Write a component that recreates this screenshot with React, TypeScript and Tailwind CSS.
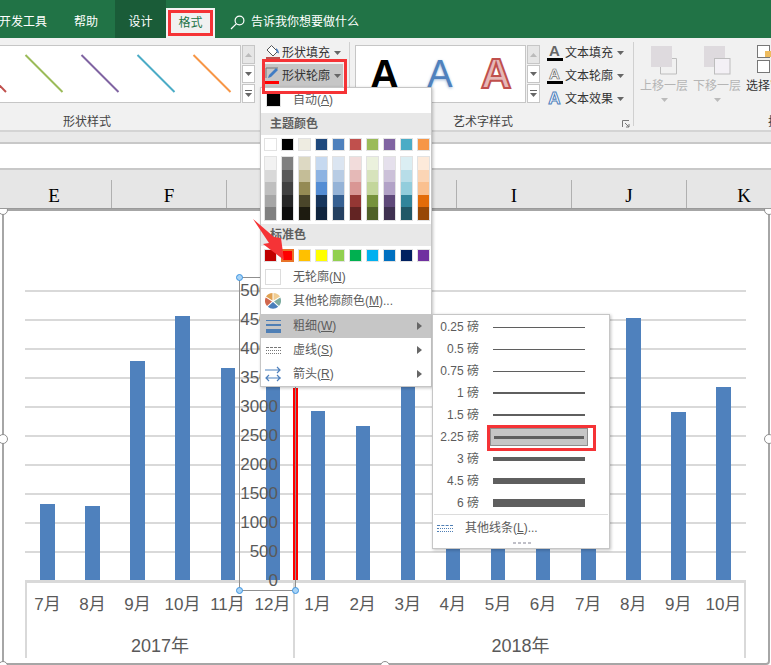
import React from "react";

const theme = ["#ffffff","#000000","#eeece1","#1f497d","#4f81bd","#c0504d","#9bbb59","#8064a2","#4bacc6","#f79646"];
const shades = [
  ["#f2f2f2","#d9d9d9","#bfbfbf","#a6a6a6","#808080"],
  ["#808080","#595959","#404040","#262626","#0d0d0d"],
  ["#ddd9c3","#c4bd97","#948a54","#4a452a","#1d1b10"],
  ["#c6d9f0","#8db3e2","#548dd4","#17365d","#0f243e"],
  ["#dbe5f1","#b8cce4","#95b3d7","#366092","#244061"],
  ["#f2dcdb","#e5b9b7","#d99694","#953734","#632423"],
  ["#ebf1dd","#d7e3bc","#c3d69b","#76923c","#4f6128"],
  ["#e5e0ec","#ccc1d9","#b2a2c7","#5f497a","#3f3151"],
  ["#dbeef3","#b7dde8","#92cddc","#31859b","#205867"],
  ["#fdeada","#fbd5b5","#fac08f","#e36c09","#974806"],
];
const standard = ["#c00000","#ff0000","#ffc000","#ffff00","#92d050","#00b050","#00b0f0","#0070c0","#002060","#7030a0"];
const barHeights = [76,74,219,264,212,195,169,154,215,120,110,130,110,262,168,193];
const months = ["7月","8月","9月","10月","11月","12月"];
const months2 = ["1月","2月","3月","4月","5月","6月","7月","8月","9月","10月"];
const weights = [
  ["0.25",1],["0.5",1],["0.75",1],["1",2],["1.5",2],["2.25",3],["3",4],["4.5",6],["6",8],
] as const;

function Caret({ color = "#666" }: { color?: string }) {
  return (
    <svg width="7" height="4" viewBox="0 0 7 4" className="shrink-0"><path d="M0 0h7L3.5 4z" fill={color} /></svg>
  );
}

function RightArrow() {
  return (
    <svg width="5" height="8" viewBox="0 0 5 8" className="ml-auto mr-[9px]"><path d="M0 0l5 4-5 4z" fill="#666" /></svg>
  );
}

function ScrollCol() {
  return (
    <div className="flex h-[58px] w-[13px] flex-col gap-px">
      <div className="flex h-[19px] items-center justify-center border border-[#c6c6c6] bg-[#e6e6e6]">
        <svg width="7" height="4" viewBox="0 0 7 4"><path d="M0 4h7L3.5 0z" fill="#bbb" /></svg>
      </div>
      <div className="flex h-[18px] items-center justify-center border border-[#c6c6c6] bg-white">
        <Caret />
      </div>
      <div className="flex h-[19px] flex-col items-center justify-center gap-[2px] border border-[#c6c6c6] bg-white">
        <div className="h-px w-[7px] bg-[#666]" />
        <Caret />
      </div>
    </div>
  );
}

function CmdRow({ icon, label, active, wide }: { icon: React.ReactNode; label: string; active?: boolean; wide?: boolean }) {
  return (
    <div className={`flex h-[23px] items-center ${wide ? "" : "pl-[2px]"} ${active ? "bg-[#c6c6c6]" : ""}`}>
      <div className={`flex h-[20px] shrink-0 items-center justify-center ${wide ? "w-[17px]" : "w-[15px]"}`}>{icon}</div>
      <span className="ml-[2px] whitespace-nowrap text-[12px] text-[#333]">{label}</span>
      <span className="ml-[4px]"><Caret /></span>
    </div>
  );
}

function MenuRow({ icon, label, u, tail, active, arrow }: { icon?: React.ReactNode; label: string; u: string; tail?: string; active?: boolean; arrow?: boolean }) {
  return (
    <div className={`flex h-[24px] items-center pl-[4px] text-[12px] text-[#5c5c5c] ${active ? "bg-[#c6c6c6]" : ""}`}>
      <div className="flex w-[16px] shrink-0 items-center justify-center">{icon}</div>
      <span className="ml-[12px]">{label}(<span className="underline">{u}</span>){tail}</span>
      {arrow ? <RightArrow /> : null}
    </div>
  );
}

function Swatch({ color }: { color: string }) {
  return <div className="h-[13px] w-[13px] border border-[#e2e2e2]" style={{ backgroundColor: color }} />;
}

function Handle({ className }: { className: string }) {
  return <div className={`absolute h-[7px] w-[7px] rounded-full border border-[#3d94e0] bg-[#a8d4f7] ${className}`} />;
}

function BigHandle({ className }: { className: string }) {
  return <div className={`absolute h-[10px] w-[10px] rounded-full border border-[#8f8f8f] bg-white ${className}`} />;
}

export default function App() {
  const sans = "[font-family:'Liberation_Sans','Noto_Sans_CJK_SC',sans-serif]";
  return (
    <div className={`relative flex h-[665px] w-[771px] flex-col overflow-hidden bg-white ${sans}`}>
      {/* title tabs */}
      <div className="flex h-[38px] shrink-0 items-stretch bg-[#217346] text-[12px] text-white">
        <span className="ml-[-1px] mr-[27px] self-center pt-[6px]">开发工具</span>
        <span className="mr-[17px] self-center pt-[6px]">帮助</span>
        <div className="flex w-[51px] items-center justify-center bg-[#1a5c38] pt-[6px]">设计</div>
        <div className="mt-[8px] flex w-[49px] border-2 border-b-0 border-[#f4f4f4] bg-[#f1f1f1] p-0">
          <div className="flex h-[26px] w-[45px] items-center justify-center border-[3px] border-[#f53336] text-[#217346]">格式</div>
        </div>
        <svg width="15" height="15" viewBox="0 0 15 15" className="ml-[15px] mt-[6px] self-center" fill="none" stroke="#fff" strokeWidth="1.2">
          <circle cx="9.5" cy="5.5" r="4.4" />
          <path d="M6.2 8.8L1 14" />
        </svg>
        <span className="ml-[6px] self-center pt-[6px]">告诉我你想要做什么</span>
      </div>

      {/* ribbon */}
      <div className="flex h-[94px] shrink-0 border-b-2 border-[#d4d4d4] bg-[#f1f1f1]">
        <div className="flex w-[350px] shrink-0">
          <div className="w-[258px] shrink-0 pt-[7px]">
            <div className="flex h-[58px] gap-px">
              <div className="h-[58px] w-[241px] border border-l-0 border-[#c6c6c6] bg-white">
                <svg width="240" height="56" viewBox="0 0 240 56" fill="none" strokeWidth="2">
                  <path d="M-30 9L6 46" stroke="#c0504d" />
                  <path d="M25.5 9L62.5 46" stroke="#9bbb59" />
                  <path d="M81.5 9L118.5 46" stroke="#8064a2" />
                  <path d="M137.5 9L174.5 46" stroke="#4bacc6" />
                  <path d="M193.5 9L230.5 46" stroke="#f79646" />
                </svg>
              </div>
              <ScrollCol />
            </div>
            <div className="mt-[10px] h-[18px] w-[174px] text-center text-[12px] leading-[18px] text-[#444]">形状样式</div>
          </div>
          <div className="w-[85px] shrink-0 pl-[5px] pt-[3px]">
            <CmdRow
              label="形状填充"
              icon={
                <svg width="15" height="17" viewBox="0 0 15 17">
                  <path d="M6.5 1.5l6 6-4.5 4.5-6-6z" fill="#fff" stroke="#555" />
                  <path d="M11 4c2 1.5 3 3.5 3 5.5-1.5-.5-2.5-1.500-3-3z" fill="#4f81bd" />
                  <rect x="1" y="13" width="14" height="3" fill="#c0504d" />
                </svg>
              }
            />
            <CmdRow
              active
              label="形状轮廓"
              icon={
                <svg width="15" height="19" viewBox="0 0 15 19">
                  <path d="M1 2h12M1 2v10" fill="none" stroke="#777" />
                  <path d="M3 12l1-3 7-7 2 2-7 7z" fill="#3f7cc4" />
                  <rect x="0" y="15" width="14" height="3" fill="#ff0000" />
                </svg>
              }
            />
          </div>
          <div className="my-[4px] ml-auto w-px bg-[#d0d0d0]" />
        </div>

        <div className="relative flex w-[284px] shrink-0 pl-[5px]">
          <div className="w-[185px] shrink-0 pt-[7px]">
            <div className="flex h-[58px] gap-px">
              <div className="flex h-[58px] w-[171px] items-center border border-[#c6c6c6] bg-white [font-family:'Liberation_Sans',sans-serif] leading-none">
                <span className="ml-[14px] w-[24px] text-center text-[40px] font-bold text-black">A</span>
                <span className="ml-[33px] w-[26px] text-center text-[38px] text-[#4f81bd] [text-shadow:0_1px_3px_#9db8d8]">A</span>
                <span className="ml-[28px] w-[28px] text-center text-[42px] font-bold text-[#e6b8b7] [-webkit-text-stroke:2px_#c0504d]">A</span>
              </div>
              <ScrollCol />
            </div>
            <div className="mt-[10px] h-[18px] whitespace-nowrap pl-[98px] text-[12px] leading-[18px] text-[#444]">艺术字样式</div>
          </div>
          <div className="ml-[6px] pt-[3px]">
            <CmdRow
              wide
              label="文本填充"
              icon={
                <div className="flex w-[16px] flex-col items-center">
                  <span className="text-[15px] font-bold leading-[13px] text-[#666] [font-family:'Liberation_Sans',sans-serif]">A</span>
                  <div className="mt-px h-[3px] w-[16px] bg-black" />
                </div>
              }
            />
            <CmdRow
              wide
              label="文本轮廓"
              icon={
                <div className="flex w-[16px] flex-col items-center">
                  <span className="text-[15px] font-bold leading-[13px] text-white [-webkit-text-stroke:0.7px_#666] [font-family:'Liberation_Sans',sans-serif]">A</span>
                  <div className="mt-px h-[3px] w-[16px] bg-black" />
                </div>
              }
            />
            <CmdRow
              wide
              label="文本效果"
              icon={<span className="text-[17px] font-bold leading-none text-white [-webkit-text-stroke:1px_#4f81bd] [font-family:'Liberation_Sans',sans-serif]">A</span>}
            />
          </div>
          <svg width="8" height="8" viewBox="0 0 8 8" className="absolute left-[272px] top-[82px]" fill="none" stroke="#777">
            <path d="M0.5 7V.5H7" />
            <path d="M3 3l4 4M7 4v3H4" />
          </svg>
          <div className="my-[4px] ml-auto w-px bg-[#d0d0d0]" />
        </div>

        <div className="relative flex-1 overflow-hidden">
          <div className="flex gap-[5px] pl-[6px] pt-[6px] text-[12px] text-[#b5b5b5]">
            <div className="flex w-[48px] shrink-0 flex-col items-center">
              <svg width="48" height="32" viewBox="0 0 48 32">
                <rect x="11" y="2" width="21" height="21" fill="#dedade" />
                <path d="M32 14.500h4.500v15.500h-16v-7" fill="none" stroke="#bdbdbd" />
              </svg>
              <span className="mt-[2px] leading-[16px]">上移一层</span>
              <span className="mt-[4px]"><Caret color="#bbb" /></span>
            </div>
            <div className="flex w-[48px] shrink-0 flex-col items-center">
              <svg width="48" height="32" viewBox="0 0 48 32">
                <rect x="11" y="2" width="21" height="21" fill="#dedade" />
                <rect x="21.500" y="14.500" width="15.500" height="15.500" fill="#f3f0f5" stroke="#bdbdbd" />
              </svg>
              <span className="mt-[2px] leading-[16px]">下移一层</span>
              <span className="mt-[4px]"><Caret color="#bbb" /></span>
            </div>
            <div className="flex w-[48px] shrink-0 flex-col items-center">
              <svg width="48" height="32" viewBox="0 0 48 32">
                <rect x="11.500" y="1.500" width="12" height="12" fill="#fff" stroke="#777" />
                <rect x="19" y="7" width="6" height="6" fill="#eebc5e" />
                <rect x="11.500" y="16.500" width="12" height="12" fill="#fff" stroke="#777" />
              </svg>
              <span className="mt-[2px] whitespace-nowrap leading-[16px] text-[#333]">选择窗格</span>
            </div>
          </div>
          <div className="absolute left-[134px] top-[75px] h-[18px] whitespace-nowrap text-[12px] leading-[18px] text-[#444]">排列</div>
        </div>
      </div>

      {/* formula band */}
      <div className="h-[10px] shrink-0 bg-[#e9e9e9]" />
      <div className="h-[28px] shrink-0 border-y-2 border-[#c8c8c8] bg-white" />

      {/* column headers */}
      <div className="relative z-10 ml-[-3px] flex h-[39px] w-[805px] shrink-0 border-b border-[#9a9a9a] bg-[#e6e6e6]">
        {["E","F","G","H","I","J","K"].map((c) => (
          <div key={c} className="flex w-[115px] shrink-0">
            <div className="flex-1 pt-[14px] text-center text-[19px] leading-[24px] text-black [font-family:'Liberation_Serif',serif]">{c}</div>
            <div className="mt-[10px] h-[28px] w-px bg-[#b0b0b0]" />
          </div>
        ))}
      </div>

      {/* sheet + chart */}
      <div className="relative min-h-0 flex-1">
        <div className="ml-[2px] h-[456px] w-[768px] rounded-[4px] border-2 border-[#a6a6a6] bg-white">
          <div className="relative ml-[21px] mt-[79px] h-[290px] w-[721px]">
            <div className="absolute inset-0">
              {Array.from({ length: 10 }).map((_, i) => (
                <div key={i} className="h-[29px] border-t-2 border-[#d9d9d9]" />
              ))}
            </div>
            <div className="relative flex h-[290px] items-end">
              {barHeights.map((h, i) => (
                <div key={i} className="flex flex-1 justify-center">
                  <div className="w-[14.5px] bg-[#4f81bd]" style={{ height: h }} />
                </div>
              ))}
            </div>
          </div>
          <div className="ml-[21px] flex h-[78px] w-[721px] border-t-[3px] border-[#d9d9d9] text-[#595959]">
            <div className="w-[270px] shadow-[inset_2px_0_0_#d9d9d9,inset_-2px_0_0_#d9d9d9]">
              <div className="flex h-[44px] items-center text-[17px]">
                {months.map((m) => (
                  <div key={m} className="flex-1 whitespace-nowrap text-center">{m}</div>
                ))}
              </div>
              <div className="text-center text-[18px] leading-[38px]">2017年</div>
            </div>
            <div className="w-[451px] shadow-[inset_-2px_0_0_#d9d9d9]">
              <div className="flex h-[44px] items-center text-[17px]">
                {months2.map((m) => (
                  <div key={m} className="flex-1 whitespace-nowrap text-center">{m}</div>
                ))}
              </div>
              <div className="text-center text-[18px] leading-[38px]">2018年</div>
            </div>
          </div>
        </div>
        <BigHandle className="left-[-2px] top-[-4px]" />
        <BigHandle className="right-[-3px] top-[-4px]" />
        <BigHandle className="left-[-2px] top-[225px]" />
        <BigHandle className="left-[764px] top-[225px]" />
        <BigHandle className="left-[380px] top-[452px]" />
        <BigHandle className="left-[-2px] top-[452px]" />
      </div>

      {/* red outline shape */}
      <div className="absolute left-[293px] top-[388px] h-[192px] w-[5px] bg-[#ff0000]" />

      {/* selected value-axis text box */}
      <div className="absolute left-[239px] top-[277px] h-[314px] w-[57px] border border-[#8f8f8f]">
        <div className="mt-[-2px] pr-[17px] text-right text-[17px] leading-[29px] text-[#595959]">
          {[5000,4500,4000,3500,3000,2500,2000,1500,1000,500,0].map((n) => (
            <div key={n}>{n}</div>
          ))}
        </div>
        <Handle className="left-[-4px] top-[-4px]" />
        <Handle className="bottom-[-4px] left-[-4px]" />
        <Handle className="bottom-[-4px] right-[-4px]" />
      </div>

      {/* colour menu */}
      <div className="absolute left-[260px] top-[87px] z-20 h-[300px] w-[172px] border border-[#c6c6c6] bg-white shadow-[1px_1px_3px_rgba(0,0,0,0.25)]">
        <div className="flex h-[23px] items-center pl-[5px] text-[12px] text-[#5c5c5c]">
          <div className="h-[15px] w-[15px] border border-[#e2e2e2] bg-black" />
          <span className="ml-[12px]">自动(<span className="underline">A</span>)</span>
        </div>
        <div className="mt-[2px] flex h-[22px] items-center bg-[#e8e8e8] pl-[9px] text-[12px] font-bold text-[#5f5f5f]">主题颜色</div>
        <div className="mt-[3px] flex gap-[4px] pl-[3px]">
          {theme.map((c) => <Swatch key={c} color={c} />)}
        </div>
        <div className="mt-[5px] flex gap-[4px] pl-[3px]">
          {shades.map((col, i) => (
            <div key={i} className="h-[65px] w-[13px] border border-[#e2e2e2]">
              {col.map((c) => <div key={c} className="h-[12.6px]" style={{ backgroundColor: c }} />)}
            </div>
          ))}
        </div>
        <div className="mt-[3px] flex h-[22px] items-center bg-[#e8e8e8] pl-[9px] text-[12px] font-bold text-[#5f5f5f]">标准色</div>
        <div className="mt-[3px] flex gap-[4px] pl-[3px]">
          {standard.map((c, i) =>
            i === 1 ? (
              <div key={c} className="h-[13px] w-[13px] border-2 border-[#e8742a]" style={{ backgroundColor: c }} />
            ) : (
              <Swatch key={c} color={c} />
            )
          )}
        </div>
        <div className="mt-[3px] flex h-[23px] items-center pl-[4px] text-[12px] text-[#5c5c5c]">
          <div className="h-[16px] w-[16px] border border-[#dcdcdc] bg-white" />
          <span className="ml-[12px]">无轮廓(<span className="underline">N</span>)</span>
        </div>
        <div className="h-px bg-[#dcdcdc]" />
        <MenuRow
          label="其他轮廓颜色"
          u="M"
          tail="..."
          icon={
            <svg width="16" height="16" viewBox="0 0 16 16">
              <path d="M7.500 7.500L7.500 0A7.800 7.800 0 0 0 1 3.500z" fill="#e0a050" />
              <path d="M8.500 7.500V0A7.800 7.800 0 0 1 15 3.500z" fill="#f0cd93" />
              <path d="M9 8.500l6.300-4A8 8 0 0 1 14 13z" fill="#7cab9f" />
              <path d="M8 9l5.200 4.800a8 8 0 0 1-10.400 0z" fill="#4a7ebb" />
              <path d="M7 8.500L2 13A8 8 0 0 1 .7 4.500z" fill="#d0674d" />
            </svg>
          }
        />
        <div className="h-px" />
        <MenuRow
          active
          arrow
          label="粗细"
          u="W"
          icon={
            <div className="flex w-[15px] flex-col gap-[3px]">
              <div className="h-px bg-[#4f7fb5]" />
              <div className="h-[2px] bg-[#4f7fb5]" />
              <div className="h-[4px] bg-[#4f7fb5]" />
            </div>
          }
        />
        <MenuRow
          arrow
          label="虚线"
          u="S"
          icon={
            <div className="flex w-[15px] flex-col gap-[2px]">
              <div className="border-t border-dashed border-[#777]" />
              <div className="border-t border-dotted border-[#777]" />
              <div className="border-t border-dotted border-[#777]" />
            </div>
          }
        />
        <MenuRow
          arrow
          label="箭头"
          u="R"
          icon={
            <svg width="16" height="16" viewBox="0 0 16 16" fill="none" stroke="#4f81bd" strokeWidth="1.2">
              <path d="M0 4h15M12 1l3 3-3 3" />
              <path d="M1 12h15M4 9l-3 3 3 3M12 9l3 3-3 3" />
            </svg>
          }
        />
      </div>

      {/* weight submenu */}
      <div className="absolute left-[432px] top-[314px] z-20 h-[235px] w-[178px] border border-[#c6c6c6] bg-white pt-[1px] shadow-[1px_1px_3px_rgba(0,0,0,0.25)]">
        {weights.map(([w, t]) => (
          <div key={w} className="flex h-[22px] items-center text-[12px] text-[#5c5c5c]">
            <span className="w-[46px] shrink-0 whitespace-nowrap text-right">{w} 磅</span>
            <div className={`ml-[11px] flex h-[18px] w-[98px] items-center px-[3px] ${w === "2.25" ? "border border-[#8e8e8e] bg-[#c6c6c6]" : ""}`}>
              <div className="w-full bg-[#5f5f5f]" style={{ height: t }} />
            </div>
          </div>
        ))}
        <div className="mx-[1px] h-px bg-[#dcdcdc]" />
        <div className="mt-[1px] flex h-[24px] items-center pl-[4px] text-[12px] text-[#5c5c5c]">
          <div className="flex w-[16px] flex-col gap-[2px]">
            <div className="border-t border-dashed border-[#4f7fb5]" />
            <div className="border-t border-dotted border-[#4f7fb5]" />
            <div className="border-t border-dotted border-[#4f7fb5]" />
          </div>
          <span className="ml-[12px]">其他线条(<span className="underline">L</span>)...</span>
        </div>
        <div className="mt-[2px] flex justify-center gap-[2px] pl-[2px]">
          {[0,1,2,3].map((i) => <div key={i} className="h-[2px] w-[3px] bg-[#c0c0c8]" />)}
        </div>
      </div>

      {/* annotations */}
      <div className="absolute left-[262px] top-[59px] z-30 h-[35px] w-[85px] border-[3px] border-[#f53336]" />
      <div className="absolute left-[487px] top-[425px] z-30 h-[26px] w-[109px] border-[3px] border-[#f53336]" />
      <svg width="40" height="50" viewBox="0 0 40 50" className="absolute left-[250px] top-[216px] z-30">
        <path d="M3 3L24 21l7 1 3 22-21-16 6-1z" fill="#f53336" />
      </svg>
    </div>
  );
}
